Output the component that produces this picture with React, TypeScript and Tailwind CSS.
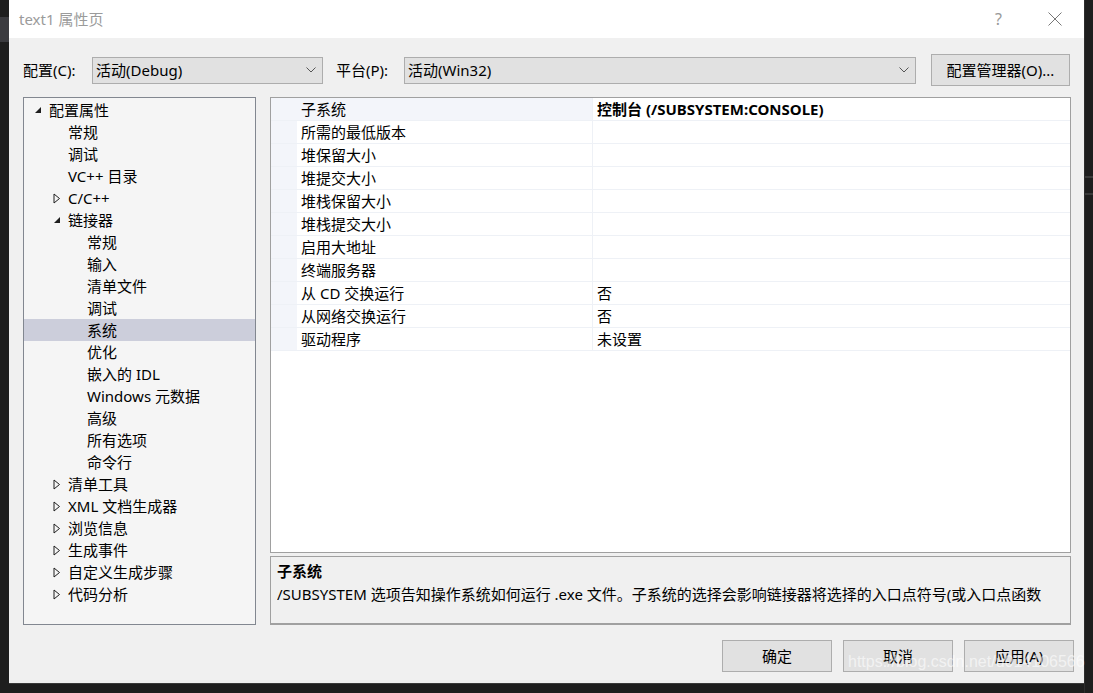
import React from 'react';

const FONT = { fontFamily: '"Noto Sans", "Noto Sans CJK SC", sans-serif' };

type TreeItem = { label: string; level: number; mark?: 'open' | 'closed'; selected?: boolean };

const TREE: TreeItem[] = [
  { label: '配置属性', level: 0, mark: 'open' },
  { label: '常规', level: 1 },
  { label: '调试', level: 1 },
  { label: 'VC++ 目录', level: 1 },
  { label: 'C/C++', level: 1, mark: 'closed' },
  { label: '链接器', level: 1, mark: 'open' },
  { label: '常规', level: 2 },
  { label: '输入', level: 2 },
  { label: '清单文件', level: 2 },
  { label: '调试', level: 2 },
  { label: '系统', level: 2, selected: true },
  { label: '优化', level: 2 },
  { label: '嵌入的 IDL', level: 2 },
  { label: 'Windows 元数据', level: 2 },
  { label: '高级', level: 2 },
  { label: '所有选项', level: 2 },
  { label: '命令行', level: 2 },
  { label: '清单工具', level: 1, mark: 'closed' },
  { label: 'XML 文档生成器', level: 1, mark: 'closed' },
  { label: '浏览信息', level: 1, mark: 'closed' },
  { label: '生成事件', level: 1, mark: 'closed' },
  { label: '自定义生成步骤', level: 1, mark: 'closed' },
  { label: '代码分析', level: 1, mark: 'closed' },
];

const PROPS: [string, string][] = [
  ['子系统', '控制台 (/SUBSYSTEM:CONSOLE)'],
  ['所需的最低版本', ''],
  ['堆保留大小', ''],
  ['堆提交大小', ''],
  ['堆栈保留大小', ''],
  ['堆栈提交大小', ''],
  ['启用大地址', ''],
  ['终端服务器', ''],
  ['从 CD 交换运行', '否'],
  ['从网络交换运行', '否'],
  ['驱动程序', '未设置'],
];

const Chevron = () => (
  <svg width="10" height="6" viewBox="0 0 10 6" className="mr-[6px]">
    <path d="M0.5 0.5 L5 5 L9.5 0.5" fill="none" stroke="#555" strokeWidth="1" />
  </svg>
);

const Mark = ({ kind }: { kind?: 'open' | 'closed' }) => {
  if (kind === 'open')
    return (
      <svg width="8" height="8" viewBox="0 0 8 8">
        <path d="M7 1 L7 7 L1 7 Z" fill="#1e1e1e" />
      </svg>
    );
  if (kind === 'closed')
    return (
      <svg width="8" height="11" viewBox="0 0 8 11">
        <path d="M1 1 L6.5 5.5 L1 10 Z" fill="none" stroke="#1e1e1e" strokeWidth="1" />
      </svg>
    );
  return null;
};

const Select = ({ value, width }: { value: string; width: string }) => (
  <div className={`${width} h-[27px] flex items-center justify-between bg-[#e1e1e1] border border-[#adadad] pl-[3px]`}>
    <span className="text-[15px] text-black leading-none">{value}</span>
    <Chevron />
  </div>
);

const Button = ({ label, className = '' }: { label: string; className?: string }) => (
  <div className={`h-[32px] flex items-center justify-center bg-[#e1e1e1] border border-[#adadad] text-[15px] text-black ${className}`}>
    {label}
  </div>
);

export default function App() {
  return (
    <div className="relative w-[1093px] h-[693px] bg-[#1e1e1e] flex overflow-hidden" style={FONT}>
      {/* left strip */}
      <div className="w-[9px] flex flex-col">
        <div className="h-[17px]" />
        <div className="h-[25px] bg-[#3b3b3f]" />
      </div>

      {/* dialog */}
      <div className="w-[1075px] h-[684px] flex flex-col bg-[#f0f0f0] border-b border-[#3a3a3a]">
        {/* title bar */}
        <div className="h-[38px] bg-white flex items-center pl-[10px] pr-[22px]">
          <span className="text-[15px] text-[#9b9b9b] flex-1">text1 属性页</span>
          <span className="text-[16px] text-[#999] mr-[46px]">?</span>
          <svg width="14" height="14" viewBox="0 0 14 14">
            <path d="M0.5 0.5 L13.5 13.5 M13.5 0.5 L0.5 13.5" stroke="#777" strokeWidth="1" />
          </svg>
        </div>

        {/* config row */}
        <div className="h-[32px] mt-[16px] flex items-center pl-[14px]">
          <span className="w-[69px] text-[15px] text-black">配置(C):</span>
          <Select value="活动(Debug)" width="w-[231px]" />
          <span className="ml-[13px] w-[68px] text-[15px] text-black">平台(P):</span>
          <Select value="活动(Win32)" width="w-[512px]" />
          <Button label="配置管理器(O)..." className="ml-[15px] w-[139px]" />
        </div>

        {/* main area */}
        <div className="mt-[11px] h-[528px] flex pl-[14px] pr-[13px]">
          {/* tree */}
          <div className="w-[233px] h-full bg-[#f5f5f5] border border-[#828790] pt-[1px] text-[15px] text-black">
            {TREE.map((t, i) => (
              <div
                key={i}
                className={`h-[22px] flex items-center ${t.selected ? 'bg-[#cccedb]' : ''}`}
              >
                <div
                  className={`flex items-center justify-center w-[10px] ${
                    t.level === 0 ? 'ml-[9px]' : t.level === 1 ? 'ml-[28px]' : 'ml-[47px]'
                  }`}
                >
                  <Mark kind={t.mark} />
                </div>
                <span className="ml-[6px] leading-none whitespace-nowrap">{t.label}</span>
              </div>
            ))}
          </div>

          {/* right column */}
          <div className="ml-[14px] flex-1 flex flex-col">
            <div className="h-[457px] bg-white border border-[#a0a0a0] flex flex-col text-[15px] text-black">
              {PROPS.map(([k, v], i) => (
                <div key={i} className="h-[23px] flex border-b border-[#eef1f6]">
                  <div className="w-[26px] bg-[#f3f5fa]" />
                  <div
                    className={`w-[296px] flex items-center pl-[4px] border-r border-[#eef1f6] ${
                      i === 0 ? 'bg-[#f3f5fa]' : ''
                    }`}
                  >
                    {k}
                  </div>
                  <div className={`flex-1 flex items-center pl-[4px] ${i === 0 ? 'font-bold' : ''}`}>{v}</div>
                </div>
              ))}
            </div>
            <div className="mt-[3px] h-[69px] bg-[#f0f0f0] border border-[#a0a0a0] border-b-2 px-[6px] pt-[3px] text-[15px] text-black">
              <div className="font-bold h-[22px] flex items-center">子系统</div>
              <div className="h-[24px] flex items-center whitespace-nowrap overflow-hidden">
                /SUBSYSTEM 选项告知操作系统如何运行 .exe 文件。子系统的选择会影响链接器将选择的入口点符号(或入口点函数
              </div>
            </div>
          </div>
        </div>

        {/* buttons */}
        <div className="mt-[15px] flex justify-end gap-[11px] pr-[10px]">
          <Button label="确定" className="w-[110px]" />
          <Button label="取消" className="w-[110px]" />
          <Button label="应用(A)" className="w-[110px]" />
        </div>
      </div>

      {/* right strip */}
      <div className="w-[9px] flex flex-col border-l border-[#2e2e2e]">
        <div className="h-[176px]" />
        <div className="h-[2px] bg-[#3a3a3a]" />
        <div className="h-[15px]" />
        <div className="h-[2px] bg-[#3a3a3a]" />
      </div>

      {/* watermark */}
      <div
        className="absolute left-[848px] top-[650px] text-[16px] text-white/60 whitespace-nowrap"
        style={{ fontFamily: '"Liberation Sans", Arial, sans-serif' }}
      >
        https://blog.csdn.net/u014106566
      </div>
    </div>
  );
}
